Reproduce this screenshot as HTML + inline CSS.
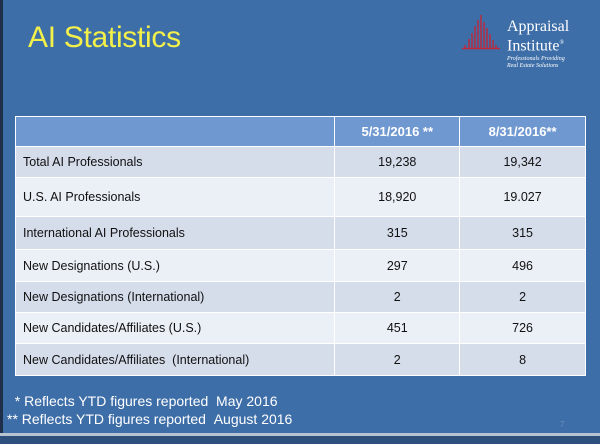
<!DOCTYPE html>
<html><head><meta charset="utf-8"><style>
*{margin:0;padding:0;box-sizing:border-box}
body{width:600px;height:444px;overflow:hidden;background:#3e6ea8;font-family:"Liberation Sans",sans-serif;position:relative}
.edge{position:absolute;left:0;top:0;width:3px;height:444px;background:#1d2f4a}
.title{position:absolute;left:28px;top:21px;color:#f4f04a;font-size:30px;letter-spacing:-0.3px}
table{position:absolute;left:15px;top:116px;width:571px;border-collapse:collapse;font-size:12.5px;color:#111}
td{border:1.5px solid #fff;padding:0 0 0 7px}
td.n{text-align:center;padding:0}
tr.h td{background:#7098d0;color:#fff;font-weight:bold;font-size:13px;height:30px}
tr.a td{background:#d5dcea}
tr.b td{background:#ebeff6}
.foot{position:absolute;left:7px;top:392px;color:#fff;font-size:14px;line-height:18px}
.line{position:absolute;left:0;top:433px;width:600px;height:3px;background:#b8c3d2}
.bot{position:absolute;left:0;top:436px;width:600px;height:8px;background:#2d4f7c}
.pg{position:absolute;left:560px;top:420px;color:#6f8fba;font-size:8px}
.logo{position:absolute;left:462px;top:13px}
.lt{position:absolute;left:507px;top:18px;color:#fff;font-family:"Liberation Serif",serif;font-size:16px;line-height:17px}
.ls{position:absolute;left:507px;top:56px;color:#fff;font-family:"Liberation Serif",serif;font-style:italic;font-size:6px;line-height:7px}
</style></head><body>
<div class="edge"></div>
<div class="title">AI Statistics</div>
<svg class="logo" width="40" height="38" viewBox="0 0 40 38">
<g stroke="#c0283a" stroke-width="1.4">
<line x1="3" y1="35" x2="3" y2="32"/><line x1="7" y1="35" x2="7" y2="26"/><line x1="10" y1="35" x2="10" y2="20"/><line x1="13" y1="35" x2="13" y2="13"/><line x1="16" y1="35" x2="16" y2="7"/><line x1="19" y1="35" x2="19" y2="2"/><line x1="22" y1="35" x2="22" y2="9"/><line x1="25" y1="35" x2="25" y2="15"/><line x1="28" y1="35" x2="28" y2="21"/><line x1="31" y1="35" x2="31" y2="27"/><line x1="34" y1="35" x2="34" y2="32"/></g>
<line x1="0" y1="35.5" x2="38" y2="35.5" stroke="#c0283a" stroke-width="1.5"/></svg>
<div class="lt">Appraisal<br>Institute<sup style="font-size:6px">®</sup></div>
<div class="ls">Professionals Providing<br>Real Estate Solutions</div>
<table>
<colgroup><col style="width:320px"><col style="width:125px"><col style="width:126px"></colgroup>
<tr class="h"><td></td><td class="n">5/31/2016 **</td><td class="n">8/31/2016**</td></tr>
<tr class="a" style="height:31px"><td>Total AI Professionals</td><td class="n">19,238</td><td class="n">19,342</td></tr>
<tr class="b" style="height:39px"><td>U.S. AI Professionals</td><td class="n">18,920</td><td class="n">19.027</td></tr>
<tr class="a" style="height:33px"><td>International AI Professionals</td><td class="n">315</td><td class="n">315</td></tr>
<tr class="b" style="height:32px"><td>New Designations (U.S.)</td><td class="n">297</td><td class="n">496</td></tr>
<tr class="a" style="height:31px"><td>New Designations (International)</td><td class="n">2</td><td class="n">2</td></tr>
<tr class="b" style="height:31px"><td>New Candidates/Affiliates (U.S.)</td><td class="n">451</td><td class="n">726</td></tr>
<tr class="a" style="height:32px"><td>New Candidates/Affiliates &nbsp;(International)</td><td class="n">2</td><td class="n">8</td></tr>
</table>
<div class="foot">&nbsp;&nbsp;* Reflects YTD figures reported &nbsp;May 2016<br>** Reflects YTD figures reported &nbsp;August 2016</div>
<div class="pg">7</div>
<div class="line"></div><div class="bot"></div>
</body></html>
